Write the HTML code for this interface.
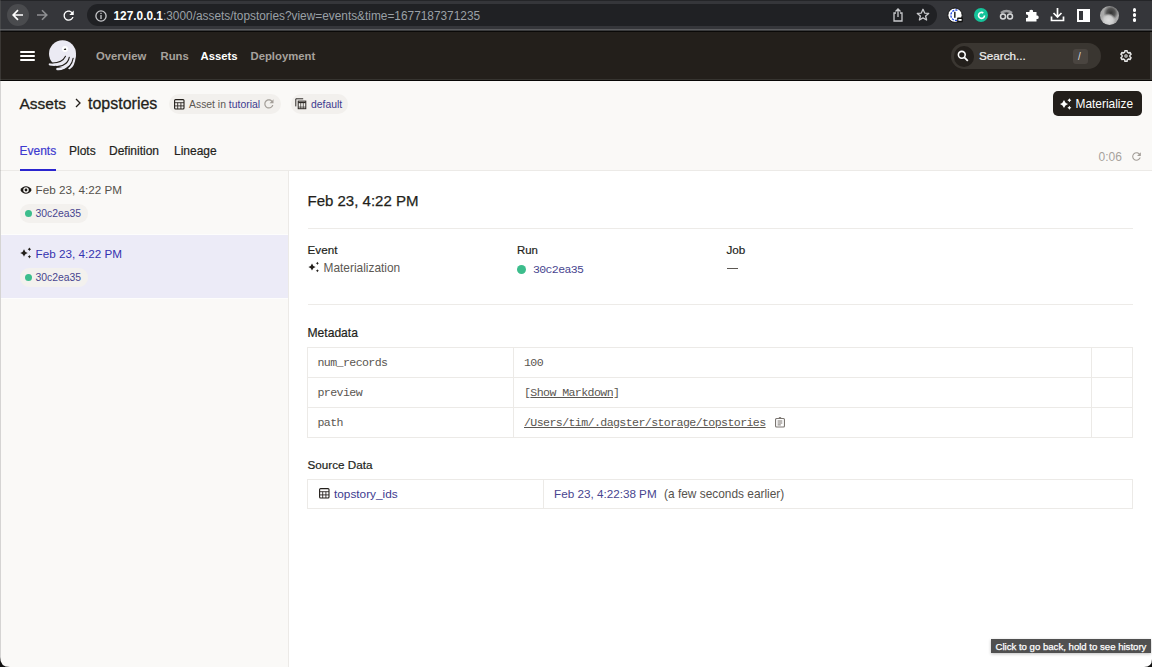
<!DOCTYPE html>
<html><head><meta charset="utf-8">
<style>
*{box-sizing:border-box;margin:0;padding:0}
html,body{width:1152px;height:667px;overflow:hidden;background:#fff;font-family:"Liberation Sans",sans-serif}
.a{position:absolute;white-space:nowrap}
#chrome{position:absolute;left:0;top:0;width:1152px;height:29px;background:#35363a}
#chromeTop{position:absolute;left:0;top:0;width:1152px;height:1px;background:#242528}
#sep1{position:absolute;left:0;top:29px;width:1152px;height:1px;background:#5c5d60}#sep1b{position:absolute;left:0;top:30px;width:1152px;height:1px;background:#3a3b3d}
#sep2{position:absolute;left:0;top:31px;width:1152px;height:1px;background:#0a0908}
#nav{position:absolute;left:0;top:32px;width:1152px;height:48px;background:#231f1b}
#navb{position:absolute;left:0;top:79px;width:1152px;height:1px;background:#363430}#navb2{position:absolute;left:0;top:80px;width:1152px;height:1px;background:#080706}
#hdr{position:absolute;left:0;top:81px;width:1152px;height:89px;background:#faf9f7}
#hdrb{position:absolute;left:0;top:170px;width:1152px;height:1px;background:#eceae7}
#left{position:absolute;left:0;top:171px;width:288px;height:496px;background:#faf9f7}
#leftb{position:absolute;left:288px;top:171px;width:1px;height:496px;background:#eceae7}
#winl{position:absolute;left:0;top:0;width:1px;height:667px;background:rgba(120,120,120,.28)}
.sel{position:absolute;left:1px;top:235px;width:287px;height:63px;background:#ecebf7}
.navt{font-size:11.3px;font-weight:bold;color:#a7a29d;top:49px;line-height:14px}
.pill{position:absolute;border-radius:10px;background:#f2f0ed}
.mono{font-family:"Liberation Mono",monospace}
.tb{position:absolute;border:1px solid #eceae7}
</style></head><body>
<div id="chrome"></div><div id="chromeTop"></div>
<div id="sep1"></div><div id="sep1b"></div><div id="sep2"></div>
<div id="nav"></div><div id="navb"></div><div id="navb2"></div>
<div id="hdr"></div><div id="hdrb"></div>
<div id="left"></div><div id="leftb"></div>

<!-- chrome toolbar -->
<div class="a" style="left:7px;top:4px;width:22px;height:22px;border-radius:11px;background:#4a4b4e"></div>
<svg class="a" style="left:11px;top:8px" width="14" height="14" viewBox="0 0 14 14"><path d="M12 7H2.5M7 2.2L2.2 7L7 11.8" stroke="#fff" stroke-width="1.7" fill="none"/></svg>
<svg class="a" style="left:35px;top:8px" width="14" height="14" viewBox="0 0 14 14"><path d="M2 7H11.5M7 2.2L11.8 7L7 11.8" stroke="#8e8f92" stroke-width="1.6" fill="none"/></svg>
<svg class="a" style="left:61.25px;top:7.55px" width="15.3" height="15.3" viewBox="0 0 24 24"><path d="M17.65 6.35C16.2 4.9 14.21 4 12 4c-4.42 0-7.99 3.58-7.99 8s3.57 8 7.99 8c3.73 0 6.84-2.55 7.73-6h-2.08c-.82 2.33-3.04 4-5.65 4-3.31 0-6-2.69-6-6s2.69-6 6-6c1.66 0 3.14.69 4.22 1.78L13 11h7V4l-2.35 2.35z" fill="#fff"/></svg>
<div class="a" style="left:87px;top:4px;width:850px;height:22px;border-radius:11px;background:#202124"></div>
<svg class="a" style="left:95px;top:10px" width="12" height="12" viewBox="0 0 12 12"><circle cx="6" cy="6" r="5.1" stroke="#c8c9cc" stroke-width="1.3" fill="none"/><rect x="5.35" y="5" width="1.3" height="4" fill="#c8c9cc"/><rect x="5.35" y="2.8" width="1.3" height="1.3" fill="#c8c9cc"/></svg>
<div class="a" style="left:113.5px;top:9px;font-size:11.86px;line-height:15px;color:#9aa0a6"><span style="color:#fff;font-weight:bold">127.0.0.1</span>:3000/assets/topstories?view=events&amp;time=1677187371235</div>
<!-- share / star -->
<svg class="a" style="left:892px;top:8px" width="12" height="14" viewBox="0 0 12 14"><path d="M4 5H2V13H10V5H8M6 9V1M3.5 3.5L6 1L8.5 3.5" stroke="#c8c9cc" stroke-width="1.3" fill="none"/></svg>
<svg class="a" style="left:916px;top:8px" width="14" height="14" viewBox="0 0 14 14"><path d="M7 1.3L8.7 5.1L12.7 5.4L9.6 8L10.6 12L7 9.9L3.4 12L4.4 8L1.3 5.4L5.3 5.1Z" stroke="#c8c9cc" stroke-width="1.3" fill="none" stroke-linejoin="round"/></svg>
<!-- extensions -->
<svg class="a" style="left:947px;top:6.5px" width="17" height="17" viewBox="0 0 17 17"><circle cx="8" cy="8.2" r="7.2" fill="#fff" stroke="#111" stroke-width="1"/><path d="M10.5 3.2A5.2 5.2 0 1 0 10.5 13.2" stroke="#1f44e0" stroke-width="1.3" stroke-dasharray="2.2 1.1" fill="none"/><rect x="7" y="4.8" width="1.6" height="6" fill="#333"/><rect x="10.2" y="10.6" width="5.6" height="4.6" rx=".6" fill="#111"/><rect x="11.4" y="12" width="3.2" height="1.8" fill="#fff"/></svg>
<div class="a" style="left:974px;top:8px;width:14px;height:14px;border-radius:7px;background:#15c39a"></div>
<svg class="a" style="left:976.5px;top:10.5px" width="9" height="9" viewBox="0 0 9 9"><path d="M7.5 4.5A3 3 0 1 1 6.3 2" stroke="#fff" stroke-width="1.6" fill="none"/></svg>
<svg class="a" style="left:999px;top:9px" width="15" height="12" viewBox="0 0 15 12"><path d="M2 4Q7.5 0 13 4" stroke="#9c9da0" stroke-width="2.5" fill="none"/><circle cx="4" cy="7.5" r="2.5" stroke="#d6d7d9" stroke-width="1.5" fill="none"/><circle cx="11" cy="7.5" r="2.5" stroke="#d6d7d9" stroke-width="1.5" fill="none"/></svg>
<svg class="a" style="left:1025px;top:8px" width="14" height="14" viewBox="0 0 14 14"><path d="M1 4H4.5A1.8 1.8 0 1 1 8 4H11.5V7.5A1.8 1.8 0 1 1 11.5 11V13.5H1V10A1.8 1.8 0 1 0 1 6.5Z" fill="#fff"/></svg>
<svg class="a" style="left:1050px;top:7px" width="15" height="15" viewBox="0 0 15 15"><path d="M7.5 1V10M3.5 6L7.5 10L11.5 6M1.5 9.5V13.5H13.5V9.5" stroke="#fff" stroke-width="1.7" fill="none"/></svg>
<div class="a" style="left:1077px;top:8.5px;width:13px;height:13px;border:2px solid #fff"></div>
<div class="a" style="left:1083px;top:8.5px;width:5px;height:13px;background:#fff"></div>
<div class="a" style="left:1100px;top:6px;width:18.5px;height:18.5px;border-radius:10px;background:radial-gradient(circle at 45% 75%,#ddd 0,#ccc 25%,rgba(200,200,200,0) 40%),radial-gradient(circle at 58% 35%,#333 0,#555 25%,rgba(90,90,90,0) 45%),#a9a9a9"></div>
<div class="a" style="left:1132.5px;top:8px;width:3.5px;height:3.5px;border-radius:2px;background:#fff;box-shadow:0 5px 0 #fff,0 10px 0 #fff"></div>

<!-- nav -->
<div class="a" style="left:20px;top:51px;width:15px;height:2px;border-radius:1px;background:#fff;box-shadow:0 4px 0 #fff,0 8px 0 #fff"></div>
<svg class="a" style="left:45px;top:38px" width="36" height="36" viewBox="0 0 36 36">
 <g fill="none" stroke-linecap="round">
 <circle cx="17.5" cy="15.8" r="13.5" fill="#ebeaf3"/>
 <path d="M22.5 17.5Q17.25 28.65 5 26.3" stroke="#ebeaf3" stroke-width="2.6"/>
 <path d="M26 18.5Q22.75 31.75 12.5 31" stroke="#ebeaf3" stroke-width="2.6"/>
 <path d="M29.6 17.5Q28.6 27.7 24.4 29.9" stroke="#ebeaf3" stroke-width="2.6"/>
 <path d="M20.5 18.3Q16.75 26.05 4 24.8" stroke="#231f1b" stroke-width="1.1"/>
 <path d="M24.3 19.2Q22.45 29.15 8 28.8" stroke="#231f1b" stroke-width="1.1"/>
 <path d="M28.2 20.2Q26.4 30.25 17 32.6" stroke="#231f1b" stroke-width="1.1"/>
 </g>
 <circle cx="20" cy="11" r="3" fill="#fff"/>
 <path d="M18.7 12L20.2 10.1L21.3 12Z" fill="#231f1b"/>
</svg>
<div class="a navt" style="left:96px">Overview</div>
<div class="a navt" style="left:160.5px">Runs</div>
<div class="a navt" style="left:200.5px;color:#fff">Assets</div>
<div class="a navt" style="left:250.5px">Deployment</div>
<!-- search -->
<div class="a" style="left:951px;top:43px;width:150px;height:26px;border-radius:13px;background:#3a3631"></div>
<div class="a" style="left:953.5px;top:45.5px;width:20px;height:21px;border-radius:11px;background:#231f1b"></div>
<svg class="a" style="left:957px;top:50px" width="12" height="12" viewBox="0 0 12 12"><circle cx="4.8" cy="4.8" r="3.4" stroke="#fff" stroke-width="1.6" fill="none"/><path d="M7.3 7.3L10.8 10.8" stroke="#fff" stroke-width="1.8"/></svg>
<div class="a" style="left:979px;top:47.8px;font-size:11.7px;line-height:15px;color:#f0f0f0;-webkit-text-stroke:0.2px #f0f0f0">Search...</div>
<div class="a" style="left:1072.5px;top:49px;width:15.5px;height:14.5px;border-radius:3px;background:#4a4540"></div>
<div class="a" style="left:1078px;top:49.5px;font-size:10px;line-height:14px;color:#ddd">/</div>
<svg class="a" style="left:1120.3px;top:50.1px" width="12" height="12" viewBox="0 0 12 12"><path d="M4.72 2.21 L4.93 0.71 L7.07 0.71 L7.28 2.21 L8.65 3.00 L10.05 2.43 L11.12 4.28 L9.92 5.21 L9.92 6.79 L11.12 7.72 L10.05 9.57 L8.65 9.00 L7.28 9.79 L7.07 11.29 L4.93 11.29 L4.72 9.79 L3.35 9.00 L1.95 9.57 L0.88 7.72 L2.08 6.79 L2.08 5.21 L0.88 4.28 L1.95 2.43 L3.35 3.00Z" fill="none" stroke="#e6e6e6" stroke-width="1.45" stroke-linejoin="round"/><circle cx="6" cy="6" r="1.2" fill="none" stroke="#e6e6e6" stroke-width="1.1"/></svg>

<!-- header -->
<div class="a" style="left:19.5px;top:94.8px;font-size:15.5px;line-height:18px;color:#231f1b;-webkit-text-stroke:0.3px #231f1b">Assets</div>
<svg class="a" style="left:74.5px;top:98px" width="6" height="10" viewBox="0 0 6 10"><path d="M1 1L5 5L1 9" stroke="#231f1b" stroke-width="1.3" fill="none"/></svg>
<div class="a" style="left:88px;top:94.8px;font-size:16px;line-height:18px;color:#231f1b;-webkit-text-stroke:0.3px #231f1b">topstories</div>
<div class="pill" style="left:169px;top:94px;width:112px;height:20px"></div>
<svg class="a" style="left:174px;top:98.5px" width="11" height="11" viewBox="0 0 11 11"><rect x="0.6" y="0.6" width="9.4" height="9.4" rx="1" stroke="#231f1b" stroke-width="1.1" fill="none"/><path d="M0.6 3.7H10M0.6 6.9H10M3.7 3.7V10M6.9 3.7V10" stroke="#231f1b" stroke-width="0.85"/></svg>
<div class="a" style="left:189px;top:97.5px;font-size:10.4px;line-height:13px;color:#5c5853">Asset in <span style="color:#3d3a8f">tutorial</span></div>
<svg class="a" style="left:262px;top:96.9px" width="13.8" height="13.8" viewBox="0 0 24 24"><path d="M17.65 6.35C16.2 4.9 14.21 4 12 4c-4.42 0-7.99 3.58-7.99 8s3.57 8 7.99 8c3.73 0 6.84-2.55 7.73-6h-2.08c-.82 2.33-3.04 4-5.65 4-3.31 0-6-2.69-6-6s2.69-6 6-6c1.66 0 3.14.69 4.22 1.78L13 11h7V4l-2.35 2.35z" fill="#a39e98"/></svg>
<div class="pill" style="left:291px;top:94px;width:57px;height:20px"></div>
<svg class="a" style="left:295px;top:98px" width="12" height="12" viewBox="0 0 12 12"><path d="M0.8 8.4V0.8H8.2" stroke="#2d2925" stroke-width="1" fill="none"/><rect x="3.2" y="3.1" width="7.6" height="7.6" stroke="#2d2925" stroke-width="1" fill="none"/><path d="M3.2 4.5H10.8" stroke="#2d2925" stroke-width="1.3"/><path d="M5.7 4.6V10.7M8.3 4.6V10.7M3.2 9.1H10.8" stroke="#2d2925" stroke-width="0.7"/></svg>
<div class="a" style="left:311px;top:97.5px;font-size:10.4px;line-height:13px;color:#3d3a8f">default</div>
<!-- materialize -->
<div class="a" style="left:1053px;top:91px;width:89px;height:25px;border-radius:5px;background:#231f1b"></div>
<svg class="a" style="left:1059.95px;top:97.9px" width="12" height="12" viewBox="0 0 12 12"><path d="M4 1.95Q5.00 5.00 8.05 6Q5.00 7.00 4 10.05Q3.00 7.00 -0.05 6Q3.00 5.00 4 1.95ZM9.4 0.30Q10.00 1.70 11.40 2.3Q10.00 2.90 9.4 4.30Q8.80 2.90 7.40 2.3Q8.80 1.70 9.4 0.30ZM9.4 7.75Q10.00 9.15 11.40 9.75Q10.00 10.35 9.4 11.75Q8.80 10.35 7.40 9.75Q8.80 9.15 9.4 7.75Z" fill="#fff"/></svg>
<div class="a" style="left:1075.5px;top:97px;font-size:11.9px;line-height:15px;color:#fff">Materialize</div>
<!-- tabs -->
<div class="a" style="left:19.5px;top:143.6px;font-size:12px;line-height:15px;color:#3d3acf;-webkit-text-stroke:0.2px #3d3acf">Events</div>
<div class="a" style="left:69px;top:143.6px;font-size:12px;line-height:15px;color:#231f1b;-webkit-text-stroke:0.2px #231f1b">Plots</div>
<div class="a" style="left:109px;top:143.6px;font-size:12px;line-height:15px;color:#231f1b;-webkit-text-stroke:0.2px #231f1b">Definition</div>
<div class="a" style="left:174px;top:143.6px;font-size:12px;line-height:15px;color:#231f1b;-webkit-text-stroke:0.2px #231f1b">Lineage</div>
<div class="a" style="left:19.5px;top:169px;width:36.5px;height:2px;background:#2b25cf"></div>
<div class="a" style="left:1098.5px;top:149.5px;font-size:12px;line-height:15px;color:#a7a29d">0:06</div>
<svg class="a" style="left:1129.6px;top:149.7px" width="13" height="13" viewBox="0 0 24 24"><path d="M17.65 6.35C16.2 4.9 14.21 4 12 4c-4.42 0-7.99 3.58-7.99 8s3.57 8 7.99 8c3.73 0 6.84-2.55 7.73-6h-2.08c-.82 2.33-3.04 4-5.65 4-3.31 0-6-2.69-6-6s2.69-6 6-6c1.66 0 3.14.69 4.22 1.78L13 11h7V4l-2.35 2.35z" fill="#a39e98"/></svg>

<!-- left panel -->
<div class="sel"></div><div class="a" style="left:1px;top:234px;width:287px;height:1px;background:#fdfdfc"></div><div class="a" style="left:1px;top:298px;width:287px;height:1px;background:#fdfdfc"></div>
<svg class="a" style="left:19.95px;top:183.6px" width="12" height="12" viewBox="-6 -6 12 12"><path d="M-5.6 0C-4.4 -2.6 -2.4 -3.7 0 -3.7C2.4 -3.7 4.4 -2.6 5.6 0C4.4 2.6 2.4 3.7 0 3.7C-2.4 3.7 -4.4 2.6 -5.6 0Z" fill="#1a1714"/><circle r="2.75" fill="#faf9f7"/><circle r="1.4" fill="#1a1714"/></svg>
<div class="a" style="left:35.5px;top:183px;font-size:11.7px;line-height:14px;color:#55514c">Feb 23, 4:22 PM</div>
<div class="pill" style="left:19.5px;top:204px;width:68px;height:19px;border-radius:9px;background:#f3f1ee"></div>
<div class="a" style="left:25.3px;top:210.2px;width:7px;height:7px;border-radius:4px;background:#3cbd8c"></div>
<div class="a" style="left:35.5px;top:207px;font-size:10.4px;line-height:13px;color:#48458f">30c2ea35</div>

<svg class="a" style="left:19.96px;top:247.45px" width="12" height="12" viewBox="0 0 12 12"><path d="M4 2.20Q4.75 5.25 7.80 6Q4.75 6.75 4 9.80Q3.25 6.75 0.20 6Q3.25 5.25 4 2.20ZM9.4 0.60Q9.80 1.90 11.10 2.3Q9.80 2.70 9.4 4.00Q9.00 2.70 7.70 2.3Q9.00 1.90 9.4 0.60ZM9.4 8.05Q9.80 9.35 11.10 9.75Q9.80 10.15 9.4 11.45Q9.00 10.15 7.70 9.75Q9.00 9.35 9.4 8.05Z" fill="#231f1b"/></svg>
<div class="a" style="left:35.5px;top:247px;font-size:11.7px;line-height:14px;color:#3633b0">Feb 23, 4:22 PM</div>
<div class="pill" style="left:19.5px;top:268px;width:68px;height:19px;border-radius:9px;background:#f3f1ee"></div>
<div class="a" style="left:25.3px;top:274.2px;width:7px;height:7px;border-radius:4px;background:#3cbd8c"></div>
<div class="a" style="left:35.5px;top:271px;font-size:10.4px;line-height:13px;color:#48458f">30c2ea35</div>

<!-- main -->
<div class="a" style="left:307.5px;top:191.8px;font-size:15px;line-height:18px;color:#231f1b;-webkit-text-stroke:0.25px #231f1b">Feb 23, 4:22 PM</div>
<div class="a" style="left:307.5px;top:228px;width:825px;height:1px;background:#edebe8"></div>
<div class="a" style="left:307.5px;top:243px;font-size:11.7px;line-height:14px;color:#231f1b;-webkit-text-stroke:0.2px #231f1b">Event</div>
<svg class="a" style="left:308px;top:261.2px" width="12" height="12" viewBox="0 0 12 12"><path d="M4 2.40Q4.75 5.25 7.60 6Q4.75 6.75 4 9.60Q3.25 6.75 0.40 6Q3.25 5.25 4 2.40ZM9.4 0.70Q9.80 1.90 11.00 2.3Q9.80 2.70 9.4 3.90Q9.00 2.70 7.80 2.3Q9.00 1.90 9.4 0.70ZM9.4 8.15Q9.80 9.35 11.00 9.75Q9.80 10.15 9.4 11.35Q9.00 10.15 7.80 9.75Q9.00 9.35 9.4 8.15Z" fill="#231f1b"/></svg>
<div class="a" style="left:323.5px;top:260.5px;font-size:11.9px;line-height:14px;color:#5c5853">Materialization</div>
<div class="a" style="left:517px;top:243px;font-size:11.4px;line-height:14px;color:#231f1b;-webkit-text-stroke:0.2px #231f1b">Run</div>
<div class="a" style="left:517px;top:264.5px;width:9px;height:9px;border-radius:5px;background:#3cbd8c"></div>
<div class="a mono" style="left:533px;top:263px;font-size:11.5px;letter-spacing:-0.61px;line-height:13px;color:#48458f">30c2ea35</div>
<div class="a" style="left:726.5px;top:243px;font-size:11.7px;line-height:14px;color:#231f1b;-webkit-text-stroke:0.2px #231f1b">Job</div>
<div class="a" style="left:726.5px;top:267.5px;width:11px;height:1px;background:#5c5853"></div>
<div class="a" style="left:307.5px;top:304px;width:825px;height:1px;background:#edebe8"></div>

<div class="a" style="left:307.5px;top:325.8px;font-size:12.1px;line-height:14px;color:#231f1b;-webkit-text-stroke:0.2px #231f1b">Metadata</div>
<div class="tb" style="left:307px;top:347px;width:826px;height:91px"></div>
<div class="a" style="left:308px;top:377px;width:824px;height:1px;background:#eceae7"></div>
<div class="a" style="left:308px;top:407px;width:824px;height:1px;background:#eceae7"></div>
<div class="a" style="left:513px;top:348px;width:1px;height:89px;background:#eceae7"></div>
<div class="a" style="left:1091px;top:348px;width:1px;height:89px;background:#eceae7"></div>
<div class="a mono" style="left:317.5px;top:356px;font-size:11.6px;letter-spacing:-0.6px;line-height:13px;color:#5a5651">num_records</div>
<div class="a mono" style="left:524px;top:356px;font-size:11.6px;letter-spacing:-0.6px;line-height:13px;color:#5a5651">100</div>
<div class="a mono" style="left:317.5px;top:386px;font-size:11.6px;letter-spacing:-0.6px;line-height:13px;color:#5a5651">preview</div>
<div class="a mono" style="left:524px;top:386px;font-size:11.6px;letter-spacing:-0.6px;line-height:13px;color:#5a5651">[<span style="text-decoration:underline">Show Markdown</span>]</div>
<div class="a mono" style="left:317.5px;top:416px;font-size:11.6px;letter-spacing:-0.6px;line-height:13px;color:#5a5651">path</div>
<div class="a mono" style="left:524px;top:416px;font-size:11.6px;letter-spacing:-0.6px;line-height:13px;color:#5a5651;text-decoration:underline">/Users/tim/.dagster/storage/topstories</div>
<svg class="a" style="left:775px;top:416.5px" width="10" height="11" viewBox="0 0 10 11"><rect x="0.55" y="1.5" width="8.9" height="8.5" rx="1" stroke="#7a7570" stroke-width="1.1" fill="none"/><path d="M3.3 1.5L4.1 0.6H5.9L6.7 1.5" stroke="#7a7570" stroke-width="1" fill="none"/><path d="M2.6 4H7.3M2.6 6H7.3M2.6 7.9H5.8" stroke="#7a7570" stroke-width="1"/></svg>

<div class="a" style="left:307.5px;top:458px;font-size:11.7px;line-height:14px;color:#231f1b;-webkit-text-stroke:0.2px #231f1b">Source Data</div>
<div class="tb" style="left:307px;top:479px;width:826px;height:30px"></div>
<div class="a" style="left:543px;top:480px;width:1px;height:28px;background:#eceae7"></div>
<svg class="a" style="left:319px;top:488px" width="11" height="11" viewBox="0 0 11 11"><rect x="0.6" y="0.6" width="9.4" height="9.4" rx="1" stroke="#231f1b" stroke-width="1.1" fill="none"/><path d="M0.6 3.7H10M0.6 6.9H10M3.7 3.7V10M6.9 3.7V10" stroke="#231f1b" stroke-width="0.85"/></svg>
<div class="a" style="left:334px;top:486.5px;font-size:11.8px;line-height:14px;color:#3d3a8f">topstory_ids</div>
<div class="a" style="left:554px;top:486.5px;font-size:11.7px;line-height:14px;color:#48458f">Feb 23, 4:22:38 PM</div>
<div class="a" style="left:664px;top:486.5px;font-size:11.9px;line-height:14px;color:#56524d">(a few seconds earlier)</div>

<!-- tooltip -->
<div class="a" style="left:991px;top:639px;width:160px;height:14px;background:#505050;box-shadow:0 1px 3px rgba(0,0,0,.25)"></div>
<div class="a" style="left:995.5px;top:639.5px;font-size:9.6px;line-height:13px;color:#fff;-webkit-text-stroke:0.25px #fff">Click to go back, hold to see history</div>
<div id="winl"></div>
<div class="a" style="left:1150px;top:32px;width:2px;height:48px;background:#3a3835"></div>
<svg class="a" style="left:0;top:657px" width="10" height="10" viewBox="0 0 10 10"><path d="M0 0V10H10Q0 10 0 0Z" fill="#111"/></svg>
<svg class="a" style="left:1144px;top:659px" width="8" height="8" viewBox="0 0 8 8"><path d="M8 0V8H0Q8 8 8 0Z" fill="#111"/></svg>
</body></html>
